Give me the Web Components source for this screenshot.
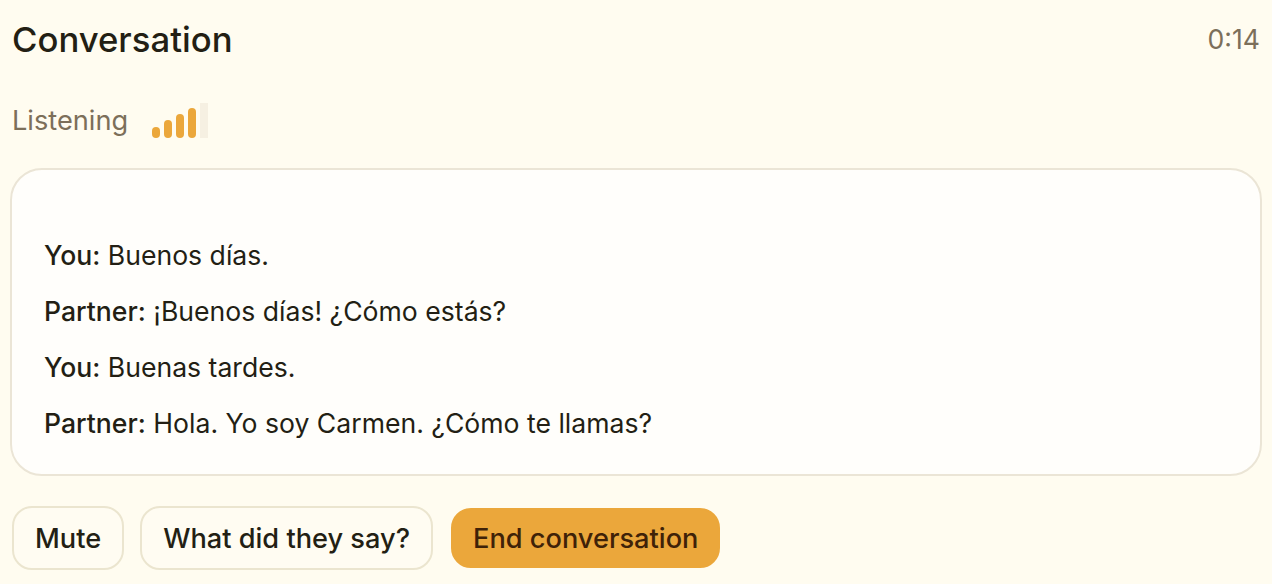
<!DOCTYPE html>
<html>
<head>
<meta charset="utf-8">
<style>
  html, body { margin: 0; background: #fffcf0; }
  body { font-family: "Inter", "Liberation Sans", sans-serif; color: #231f14; }
</style>
</head>
<body>
<conversation-panel>
  <chat-line speaker="You">Buenos días.</chat-line>
  <chat-line speaker="Partner">¡Buenos días! ¿Cómo estás?</chat-line>
  <chat-line speaker="You">Buenas tardes.</chat-line>
  <chat-line speaker="Partner">Hola. Yo soy Carmen. ¿Cómo te llamas?</chat-line>
</conversation-panel>
<script>
class LevelMeter extends HTMLElement {
  constructor() {
    super();
    this.attachShadow({ mode: "open" });
  }
  connectedCallback() {
    const heights = [11, 18, 24, 30, 35];
    this.shadowRoot.innerHTML = `
      <style>
        :host { display: flex; align-items: flex-end; gap: 4px; height: 35px; }
        span { width: 8px; border-radius: 4px; background: #eba73b; }
        span:last-child { background: #f6f0e2; border-radius: 0; }
      </style>
      ${heights.map(h => `<span style="height:${h}px"></span>`).join("")}
    `;
  }
}
customElements.define("level-meter", LevelMeter);

class ChatLine extends HTMLElement {
  constructor() {
    super();
    this.attachShadow({ mode: "open" });
  }
  connectedCallback() {
    this.shadowRoot.innerHTML = `
      <style>
        :host { display: block; font-size: 26.6px; line-height: 40px; color: #231f14; }
        b { font-weight: 500; }
      </style>
      <b>${this.getAttribute("speaker")}:</b> <slot></slot>
    `;
  }
}
customElements.define("chat-line", ChatLine);

class PillButton extends HTMLElement {
  constructor() {
    super();
    this.attachShadow({ mode: "open" });
  }
  connectedCallback() {
    this.shadowRoot.innerHTML = `
      <style>
        :host { display: block; }
        :host([primary]) { margin-left: 2px; }
        button {
          font: 500 27.2px "Inter", "Liberation Sans", sans-serif;
          color: #231f14;
          height: 64px;
          padding: 0 21px;
          border-radius: 20px;
          background: #fffcf2;
          border: 2px solid #ebe5cf;
          box-sizing: border-box;
        }
        :host([primary]) button { background: #eba73b; border-color: #eba73b; height: 60px; color: #3f2208; padding: 0 20px; }
      </style>
      <button><slot></slot></button>
    `;
  }
}
customElements.define("pill-button", PillButton);

class ConversationPanel extends HTMLElement {
  constructor() {
    super();
    this.attachShadow({ mode: "open" });
  }
  connectedCallback() {
    this.shadowRoot.innerHTML = `
      <style>
        :host { display: block; padding: 15px 12px 0 12px; }
        header { display: flex; justify-content: space-between; align-items: center; height: 48px; }
        h1 { margin: 0; font-size: 34.7px; font-weight: 500; color: #231f14; }
        .time { font-size: 26.6px; color: #7c6f5a; }
        .status { display: flex; align-items: center; gap: 24px; margin-top: 37px; height: 40px; }
        .status span { font-size: 27.2px; color: #7c6f5a; }
        .log {
          box-sizing: border-box;
          height: 308px;
          margin: 28px -2px 0 -2px;
          padding: 65px 32px 0 32px;
          background: #fffefb;
          border: 2px solid #ebe5d6;
          border-radius: 32px;
          display: flex;
          flex-direction: column;
          gap: 16px;
        }
        .actions { display: flex; align-items: center; gap: 16px; margin-top: 30px; }
      </style>
      <header><h1>Conversation</h1><div class="time">0:14</div></header>
      <div class="status"><span>Listening</span><level-meter></level-meter></div>
      <div class="log"><slot></slot></div>
      <div class="actions">
        <pill-button>Mute</pill-button>
        <pill-button>What did they say?</pill-button>
        <pill-button primary>End conversation</pill-button>
      </div>
    `;
  }
}
customElements.define("conversation-panel", ConversationPanel);
</script>
</body>
</html>
